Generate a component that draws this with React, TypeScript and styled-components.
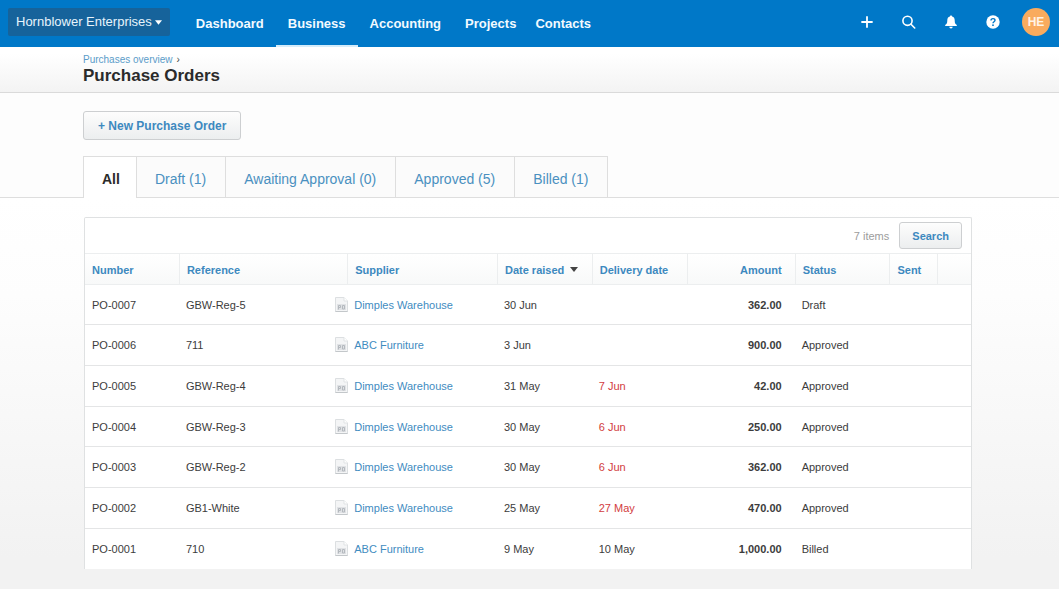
import React from "react";
import styled, { createGlobalStyle } from "styled-components";

const GlobalStyle = createGlobalStyle`
  * { box-sizing: border-box; }
  body {
    margin: 0;
    background: #f2f2f2;
    color: #3c3c3c;
    font-family: "Liberation Sans", Arial, Helvetica, sans-serif;
    font-size: 11px;
    line-height: 16px;
  }
  button { font: inherit; margin: 0; cursor: pointer; }
  a { text-decoration: none; }
`;

const Page = styled.div`
  display: flex;
  flex-direction: column;
  min-height: 100vh;
`;

const TopBar = styled.header`
  display: flex;
  align-items: stretch;
  height: 47px;
  padding: 0 9px 0 8px;
  background: #0078c8;
`;

const OrgButton = styled.button`
  display: flex;
  align-items: center;
  gap: 3px;
  height: 28px;
  margin: 8px 14px 0 0;
  padding: 0 8px;
  border: 0;
  border-radius: 2px;
  background: #16639b;
  color: #e8f4fc;
  font-size: 13px;
  white-space: nowrap;
`;

const Nav = styled.nav`
  display: flex;
  flex: 1;
`;

const NavLink = styled.a<{ $active?: boolean; $tight?: boolean }>`
  display: flex;
  align-items: center;
  padding: 2px ${(p) => (p.$tight ? 7 : 12)}px 0 12px;
  border-bottom: 2px solid ${(p) => (p.$active ? "#d5ecfa" : "transparent")};
  color: #f2faff;
  font-size: 13px;
  font-weight: bold;
`;

const Tools = styled.div`
  display: flex;
  height: 44px;
  align-items: center;
`;

const ToolButton = styled.button`
  display: flex;
  justify-content: center;
  align-items: center;
  width: 42px;
  height: 42px;
  padding: 0;
  border: 0;
  background: none;
  color: #fff;
`;

const Avatar = styled.button`
  width: 28px;
  height: 28px;
  margin-left: 8px;
  padding: 0;
  border: 0;
  border-radius: 50%;
  background: #f9ab5e;
  color: #fff3e6;
  font-size: 12px;
  font-weight: bold;
`;

const TitleBand = styled.div`
  height: 46px;
  padding: 7px 87px 0 83px;
  border-bottom: 1px solid #dadada;
  background: linear-gradient(#fff 15%, #f3f3f3);
`;

const Breadcrumb = styled.div`
  display: flex;
  gap: 4px;
  color: #444;
  font-size: 10px;
  line-height: 12px;

  a { color: #5b9cc9; }
`;

const Title = styled.h1`
  margin: 0;
  color: #2b2b2b;
  font-size: 17px;
  line-height: 20px;
`;

const Actions = styled.div`
  padding: 18px 87px 16px 83px;
  background: #fdfdfd;
`;

const Button = styled.button<{ $large?: boolean }>`
  height: ${(p) => (p.$large ? 29 : 27)}px;
  padding: 0 ${(p) => (p.$large ? 14 : 12)}px;
  border: 1px solid #cdcfd1;
  border-radius: 3px;
  background: linear-gradient(#fdfdfd, #eceeef);
  color: #3d89bf;
  font-size: ${(p) => (p.$large ? 12 : 11)}px;
  font-weight: bold;
`;

const TabBar = styled.div`
  display: flex;
  height: 42px;
  padding: 0 87px 0 83px;
  background: #fdfdfd;
  box-shadow: inset 0 -1px #dedede;
`;

const Tab = styled.button<{ $active?: boolean }>`
  padding: 4px ${(p) => (p.$active ? 16 : 19)}px ${(p) => (p.$active ? 1 : 0)}px 18px;
  border: solid #dedede;
  border-width: 1px 1px ${(p) => (p.$active ? 0 : 1)}px ${(p) => (p.$active ? 1 : 0)}px;
  background: ${(p) => (p.$active ? "#fff" : "#fbfbfb")};
  color: ${(p) => (p.$active ? "#2b2b2b" : "#4a90c0")};
  font-size: 14px;
  font-weight: ${(p) => (p.$active ? "bold" : "normal")};
  white-space: nowrap;
`;

const Content = styled.main`
  flex: 1;
  padding: 19px 87px 20px 84px;
  background: linear-gradient(#fff, #fdfdfd 25%, #f2f2f2 92%);
`;

const Panel = styled.section`
  border: solid #dfe1e2;
  border-width: 1px 1px 0;
  border-radius: 2px 2px 0 0;
  background: #fff;
`;

const Toolbar = styled.div`
  display: flex;
  justify-content: flex-end;
  align-items: center;
  gap: 10px;
  height: 35px;
  padding-right: 9px;
  color: #9c9c9c;
`;

const Table = styled.table`
  width: 100%;
  border-collapse: separate;
  border-spacing: 0;
  table-layout: fixed;
`;

const Col = styled.col<{ $share: number }>`
  width: ${(p) => p.$share}%;
`;

const HeadCell = styled.th<{ $right?: boolean }>`
  height: 32px;
  padding: 0 ${(p) => (p.$right ? 13 : 0)}px 0 7px;
  border: solid #eceeef;
  border-width: 1px 0 1px 1px;
  background: linear-gradient(#fff, #f8f9f9);
  text-align: ${(p) => (p.$right ? "right" : "left")};
  white-space: nowrap;

  &:first-child { border-left: 0; }
`;

const SortButton = styled.button`
  display: inline-flex;
  align-items: center;
  gap: 6px;
  padding: 0;
  border: 0;
  background: none;
  color: #3d89bf;
  font-weight: bold;
  vertical-align: middle;
`;

const Row = styled.tr`
  height: 41px;

  &:nth-child(3n + 1) { height: 40px; }
  &:last-child td { border-bottom: 0; }
`;

const Cell = styled.td<{ $kind?: "icon" | "amount" | "late" }>`
  padding: 0 ${(p) => (p.$kind === "amount" ? 13 : 0)}px 0 ${(p) => (p.$kind === "icon" ? 5 : 7)}px;
  border-bottom: 1px solid #e4e5e6;
  color: ${(p) => (p.$kind === "late" ? "#d23c40" : "#3c3c3c")};
  font-weight: ${(p) => (p.$kind === "amount" ? "bold" : "normal")};
  text-align: ${(p) => (p.$kind === "amount" ? "right" : "left")};
  white-space: nowrap;

  svg { display: block; }
  a { color: #3f8cbf; }
`;

const Caret = ({ size, color }: { size: number; color: string }) => (
  <svg width={size} height="5" viewBox="0 0 8 5" fill={color} aria-hidden="true">
    <path d="M0 0h8L4 5z" />
  </svg>
);

const DocumentIcon = () => (
  <svg width="13" height="16" viewBox="0 0 13 16" role="img" aria-label="Document">
    <path d="M.5.5h8.500l3.500 3.500v10.500H.5z" fill="#f4f5f6" stroke="#dcdfe1" />
    <path d="M9 .5v3.500h3.500" fill="#fff" stroke="#e0e3e5" />
    <path d="M.5 14.500h12" stroke="#c3c7ca" />
    <rect x="2" y="7" width="9" height="6" fill="#e0e2e5" />
    <path d="M3.500 12.500V8.500h2v2h-2M7.500 8.500h2v3.500h-2z" fill="none" stroke="#b4b9be" />
  </svg>
);

const columns: { label: string; span?: number; right?: boolean; sorted?: boolean }[] = [
  { label: "Number" },
  { label: "Reference", span: 2 },
  { label: "Supplier" },
  { label: "Date raised", sorted: true },
  { label: "Delivery date" },
  { label: "Amount", right: true },
  { label: "Status" },
  { label: "Sent" },
];

const shares = [10.6, 17, 2, 16.9, 10.7, 10.7, 12.2, 10.7, 5.4, 3.8];

const orders = [
  { no: "PO-0007", ref: "GBW-Reg-5", supplier: "Dimples Warehouse", raised: "30 Jun", due: "", amount: "362.00", status: "Draft" },
  { no: "PO-0006", ref: "711", supplier: "ABC Furniture", raised: "3 Jun", due: "", amount: "900.00", status: "Approved" },
  { no: "PO-0005", ref: "GBW-Reg-4", supplier: "Dimples Warehouse", raised: "31 May", due: "7 Jun", late: true, amount: "42.00", status: "Approved" },
  { no: "PO-0004", ref: "GBW-Reg-3", supplier: "Dimples Warehouse", raised: "30 May", due: "6 Jun", late: true, amount: "250.00", status: "Approved" },
  { no: "PO-0003", ref: "GBW-Reg-2", supplier: "Dimples Warehouse", raised: "30 May", due: "6 Jun", late: true, amount: "362.00", status: "Approved" },
  { no: "PO-0002", ref: "GB1-White", supplier: "Dimples Warehouse", raised: "25 May", due: "27 May", late: true, amount: "470.00", status: "Approved" },
  { no: "PO-0001", ref: "710", supplier: "ABC Furniture", raised: "9 May", due: "10 May", amount: "1,000.00", status: "Billed" },
];

const tabs = ["All", "Draft (1)", "Awaiting Approval (0)", "Approved (5)", "Billed (1)"];

export default function App() {
  return (
    <Page>
      <GlobalStyle />
      <TopBar>
        <OrgButton>
          Hornblower Enterprises
          <Caret size={7} color="#fff" />
        </OrgButton>
        <Nav>
          <NavLink href="#dashboard">Dashboard</NavLink>
          <NavLink href="#business" $active>Business</NavLink>
          <NavLink href="#accounting">Accounting</NavLink>
          <NavLink href="#projects" $tight>Projects</NavLink>
          <NavLink href="#contacts">Contacts</NavLink>
        </Nav>
        <Tools>
          <ToolButton aria-label="Add">
            <svg width="12" height="12" viewBox="0 0 12 12" stroke="currentColor" strokeWidth="1.800" strokeLinecap="round">
              <path d="M6 1v10M1 6h10" />
            </svg>
          </ToolButton>
          <ToolButton aria-label="Search">
            <svg width="14" height="14" viewBox="0 0 14 14" fill="none" stroke="currentColor" strokeWidth="1.600" strokeLinecap="round">
              <circle cx="5.500" cy="5.800" r="4.600" />
              <path d="M9 9.300l3.700 3.700" />
            </svg>
          </ToolButton>
          <ToolButton aria-label="Notifications">
            <svg width="12" height="14" viewBox="0 0 12 14" fill="currentColor">
              <path d="M6 .5c.7 0 1.100.4 1.100 1.100C8.900 2.100 9.700 3.500 9.700 5.200c0 3 .7 3.800 2.100 4.800v.9H.2V10c1.400-1 2.100-1.800 2.100-4.800 0-1.700.8-3.100 2.600-3.600C4.900.9 5.300.5 6 .5z" />
              <path d="M4.300 11.700h3.400a1.700 1.700 0 0 1-3.400 0z" />
            </svg>
          </ToolButton>
          <ToolButton aria-label="Help">
            <svg width="14" height="14" viewBox="0 0 14 14">
              <circle cx="7" cy="7" r="6.700" fill="#fff" />
              <path d="M5 5.500C5 4.200 5.900 3.600 7 3.600s2 .7 2 1.700c0 1.400-2 1.500-2 3" fill="none" stroke="#0078c8" strokeWidth="1.400" />
              <circle cx="7" cy="10.200" r=".9" fill="#0078c8" />
            </svg>
          </ToolButton>
          <Avatar aria-label="Account">HE</Avatar>
        </Tools>
      </TopBar>

      <TitleBand>
        <Breadcrumb>
          <a href="#purchases">Purchases overview</a>
          <span>›</span>
        </Breadcrumb>
        <Title>Purchase Orders</Title>
      </TitleBand>

      <Actions>
        <Button $large>+ New Purchase Order</Button>
      </Actions>

      <TabBar role="tablist">
        {tabs.map((tab, i) => (
          <Tab key={tab} role="tab" aria-selected={i === 0} $active={i === 0}>
            {tab}
          </Tab>
        ))}
      </TabBar>

      <Content>
        <Panel>
          <Toolbar>
            <span>7 items</span>
            <Button>Search</Button>
          </Toolbar>
          <Table>
            <colgroup>
              {shares.map((share, i) => (
                <Col key={i} $share={share} />
              ))}
            </colgroup>
            <thead>
              <tr>
                {columns.map((c) => (
                  <HeadCell key={c.label} colSpan={c.span} $right={c.right}>
                    <SortButton>
                      {c.label}
                      {c.sorted && <Caret size={8} color="#444" />}
                    </SortButton>
                  </HeadCell>
                ))}
                <HeadCell as="td" />
              </tr>
            </thead>
            <tbody>
              {orders.map((o) => (
                <Row key={o.no}>
                  <Cell>{o.no}</Cell>
                  <Cell>{o.ref}</Cell>
                  <Cell $kind="icon"><DocumentIcon /></Cell>
                  <Cell><a href={"#" + o.no}>{o.supplier}</a></Cell>
                  <Cell>{o.raised}</Cell>
                  <Cell $kind={o.late ? "late" : undefined}>{o.due}</Cell>
                  <Cell $kind="amount">{o.amount}</Cell>
                  <Cell>{o.status}</Cell>
                  <Cell />
                  <Cell />
                </Row>
              ))}
            </tbody>
          </Table>
        </Panel>
      </Content>
    </Page>
  );
}
